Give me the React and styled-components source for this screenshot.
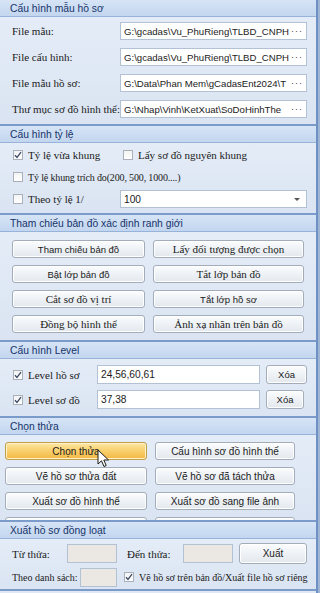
import styled, { createGlobalStyle, css } from "styled-components";

const SERIF = "'Liberation Serif', 'DejaVu Serif', serif";
const SANS = "'Liberation Sans', Arial, sans-serif";

const Global = createGlobalStyle`
  html, body { margin: 0; padding: 0; background: #9fb5d6; }
  body { width: 320px; height: 593px; overflow: hidden; }
  * { box-sizing: border-box; }
`;

const Panel = styled.div`
  position: relative;
  width: 318px;
  height: 593px;
  overflow: hidden;
  background: #dfe8f4;
  border-right: 2px solid #6f90c2;
  display: flex;
  flex-direction: column;
`;

const Section = styled.section`
  border-bottom: 2px solid #7b9bcb;
  flex: none;
`;

const Header = styled.div`
  height: 17px;
  padding: 0 10px;
  display: flex;
  align-items: center;
  font-family: ${SANS};
  font-size: 10.3px;
  color: #16336a;
  background: linear-gradient(#d6e4f6, #c3d6ef);
  border-bottom: 1px solid #98b3da;
`;

const Body = styled.div`
  height: ${(p) => p.$h}px;
  padding: ${(p) => p.$pad || "0"};
  display: flex;
  flex-direction: column;
  gap: ${(p) => p.$gap || 0}px;
  overflow: hidden;
  background: linear-gradient(#e4ecf7, #dae4f2);
`;

const Row = styled.div`
  height: ${(p) => p.$h || 18}px;
  display: flex;
  align-items: center;
  flex: none;
`;

const Label = styled.span`
  font-family: ${SERIF};
  font-size: ${(p) => p.$size || 11}px;
  letter-spacing: ${(p) => p.$ls || 0}px;
  color: #1b1b1b;
  white-space: nowrap;
  width: ${(p) => (p.$w ? `${p.$w}px` : "auto")};
  margin-left: ${(p) => p.$ml || 0}px;
  flex: none;
`;

const Field = styled.div`
  height: ${(p) => p.$h || 18}px;
  width: ${(p) => p.$w}px;
  flex: none;
  display: flex;
  align-items: center;
  justify-content: space-between;
  padding: 0 3px;
  background: ${(p) => (p.$dim ? "#ebe8e4" : "#ffffff")};
  border: 1px solid #b3c1d4;
  font-family: ${SANS};
  font-size: 10.2px;
  color: #1b1b1b;
`;

const FieldText = styled.span`
  white-space: nowrap;
  font-size: ${(p) => p.$size || 10.2}px;
`;

const Dots = styled.span`
  flex: none;
  letter-spacing: 1px;
  color: #444;
  font-size: 9px;
`;

const Arrow = styled.span`
  flex: none;
  width: 0;
  height: 0;
  margin-right: 3px;
  border-left: 3px solid transparent;
  border-right: 3px solid transparent;
  border-top: 3px solid #555;
`;

const Box = styled.span`
  width: 10px;
  height: 10px;
  flex: none;
  margin: 0 5px 0 ${(p) => p.$ml || 0}px;
  border: 1px solid #a9b0ba;
  background: linear-gradient(#f3f3f3, #ffffff);
  display: inline-flex;
  align-items: center;
  justify-content: center;
`;

const Grid = styled.div`
  display: grid;
  grid-template-columns: ${(p) => p.$cols};
  column-gap: ${(p) => p.$cg}px;
  row-gap: 7px;
  padding-left: ${(p) => p.$pl}px;
`;

const Button = styled.button`
  height: ${(p) => p.$h || 18}px;
  width: ${(p) => (p.$w ? `${p.$w}px` : "auto")};
  margin-left: ${(p) => p.$ml || 0}px;
  flex: none;
  padding: 0;
  border: 1px solid #a3adba;
  border-radius: 3px;
  font-family: ${(p) => (p.$serif ? SERIF : SANS)};
  font-size: ${(p) => p.$size || (p.$serif ? 11 : 10)}px;
  color: #1b1b1b;
  background: linear-gradient(#fbfcfd, #eef2f6 50%, #e3e8ee);
  box-shadow: inset 0 0 0 1px #ffffff;
  white-space: nowrap;
  ${(p) =>
    p.$hot &&
    css`
      border-color: #c29d4c;
      background: linear-gradient(#fde7a6, #f9d170 45%, #f4b845);
      box-shadow: inset 0 0 0 1px #fff2c7;
    `}
`;

const Cursor = styled.svg`
  position: absolute;
  left: 97px;
  top: 449px;
`;

function Check({ on, ml }) {
  return (
    <Box $ml={ml}>
      {on && (
        <svg width="8" height="8" viewBox="0 0 8 8">
          <path d="M1 4.2 L3 6.4 L7 1.2" fill="none" stroke="#3b4a66" strokeWidth="1.3" />
        </svg>
      )}
    </Box>
  );
}

const files = [
  ["File mẫu:", "G:\\gcadas\\Vu_PhuRieng\\TLBD_CNPH"],
  ["File cấu hình:", "G:\\gcadas\\Vu_PhuRieng\\TLBD_CNPH"],
  ["File mẫu hồ sơ:", "G:\\Data\\Phan Mem\\gCadasEnt2024\\T"],
  ["Thư mục sơ đồ hình thể:", "G:\\Nhap\\Vinh\\KetXuat\\SoDoHinhThe"],
];

const mapButtons = [
  ["Tham chiếu bản đồ", false],
  ["Lấy đối tượng được chọn", true],
  ["Bật lớp bản đồ", false],
  ["Tắt lớp bản đồ", true],
  ["Cắt sơ đồ vị trí", true],
  ["Tắt lớp hồ sơ", false],
  ["Đồng bộ hình thể", true],
  ["Ảnh xạ nhãn trên bản đồ", true],
];

// the last row is scrolled out of view: only the top edge of its buttons shows
const pickButtons = [
  "Chọn thửa",
  "Cấu hình sơ đồ hình thế",
  "Vẽ hồ sơ thửa đất",
  "Vẽ hồ sơ đã tách thửa",
  "Xuất sơ đồ hình thể",
  "Xuất sơ đồ sang file ảnh",
  "",
  "",
];

export default function App() {
  return (
    <>
      <Global />
      <Panel>
        <Section>
          <Header>Cấu hình mẫu hồ sơ</Header>
          <Body $h={107} $pad="5px 0 0 12px" $gap={8}>
            {files.map(([label, path]) => (
              <Row key={label}>
                <Label $w={108}>{label}</Label>
                <Field $w={187}>
                  <FieldText $size={9.6}>{path}</FieldText>
                  <Dots>···</Dots>
                </Field>
              </Row>
            ))}
          </Body>
        </Section>

        <Section>
          <Header>Cấu hình tỷ lệ</Header>
          <Body $h={70} $pad="3px 0 0 13px" $gap={4}>
            <Row>
              <Check on />
              <Label $w={95}>Tỷ lệ vừa khung</Label>
              <Check />
              <Label>Lấy sơ đồ nguyên khung</Label>
            </Row>
            <Row>
              <Check />
              <Label $size={10} $ls={-0.15}>
                Tỷ lệ khung trích đo(200, 500, 1000....)
              </Label>
            </Row>
            <Row>
              <Check />
              <Label $w={92}>Theo tỷ lệ 1/</Label>
              <Field $w={187}>
                <FieldText>100</FieldText>
                <Arrow />
              </Field>
            </Row>
          </Body>
        </Section>

        <Section>
          <Header>Tham chiếu bản đồ xác định ranh giới</Header>
          <Body $h={108} $pad="8px 0 0 0">
            <Grid $cols="133px 151px" $cg={8} $pl={12}>
              {mapButtons.map(([t, serif]) => (
                <Button key={t} $serif={serif} $size={serif ? 11 : 9.5}>
                  {t}
                </Button>
              ))}
            </Grid>
          </Body>
        </Section>

        <Section>
          <Header>Cấu hình Level</Header>
          <Body $h={57} $pad="6px 0 0 13px" $gap={6}>
            <Row $h={19}>
              <Check on />
              <Label $w={69}>Level hồ sơ</Label>
              <Field $w={163} $h={19}>
                <FieldText>24,56,60,61</FieldText>
              </Field>
              <Button $w={41} $h={19} $ml={6} $size={9.5}>
                Xóa
              </Button>
            </Row>
            <Row $h={19}>
              <Check on />
              <Label $w={69}>Level sơ đồ</Label>
              <Field $w={163} $h={19}>
                <FieldText>37,38</FieldText>
              </Field>
              <Button $w={38} $h={19} $ml={6} $size={9.5}>
                Xóa
              </Button>
            </Row>
          </Body>
        </Section>

        <Section>
          <Header>Chọn thửa</Header>
          <Body $h={85} $pad="7px 0 0 0">
            <Grid $cols="142px 140px" $cg={8} $pl={5}>
              {pickButtons.map((t, i) => (
                <Button key={i} $hot={i === 0}>
                  {t}
                </Button>
              ))}
            </Grid>
          </Body>
        </Section>

        <Section>
          <Header>Xuất hồ sơ đồng loạt</Header>
          <Body $h={50} $pad="4px 0 0 12px" $gap={3}>
            <Row $h={21}>
              <Label $w={55}>Từ thửa:</Label>
              <Field $w={50} $h={19} $dim />
              <Label $w={56} $ml={10}>
                Đến thửa:
              </Label>
              <Field $w={50} $h={19} $dim />
              <Button $w={68} $h={21} $ml={6}>
                Xuất
              </Button>
            </Row>
            <Row $h={20}>
              <Label $w={68} $size={10}>
                Theo danh sách:
              </Label>
              <Field $w={37} $h={19} $dim />
              <Check on ml={7} />
              <Label $size={10}>Vẽ hồ sơ trên bản đồ/Xuất file hồ sơ riêng</Label>
            </Row>
          </Body>
        </Section>

        <Cursor width="13" height="20" viewBox="0 0 13 20">
          <path
            d="M1 1 L1 15 L4.5 11.8 L7 17.5 L9.2 16.5 L6.8 11 L11.5 11 Z"
            fill="#ffffff"
            stroke="#1a1a1a"
            strokeWidth="1"
            strokeLinejoin="round"
          />
        </Cursor>
      </Panel>
    </>
  );
}
